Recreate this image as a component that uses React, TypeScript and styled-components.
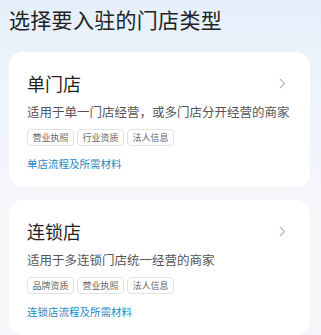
import styled, { createGlobalStyle } from "styled-components";

const GlobalStyle = createGlobalStyle`
    html, body {
        margin: 0;
        padding: 0;
    }
    body {
        font-family: "Noto Sans CJK SC", "Noto Sans", sans-serif;
        background: linear-gradient(180deg, #e5f0fb 0%, #eef4fb 30%, #f4f6fa 55%, #f5f6fa 100%);
        min-height: 335px;
    }
`

const Page = styled.div`
    padding: 4px 11px 0 9px;
    display: flex;
    flex-direction: column;
`

const Heading = styled.h1`
    margin: 0 0 18px;
    font-size: 21px;
    line-height: 30px;
    font-weight: 400;
    color: #222222;
    letter-spacing: 0.3px;
`

const CardList = styled.div`
    display: flex;
    flex-direction: column;
    gap: 13px;
`

const Card = styled.div`
    background: #ffffff;
    border-radius: 14px;
    padding: 19px 18px 15px;
    display: flex;
    flex-direction: column;
`

const CardHead = styled.div`
    display: flex;
    justify-content: space-between;
    align-items: center;
    height: 24px;
`

const CardTitle = styled.div`
    font-size: 18px;
    line-height: 24px;
    color: #1f1f1f;
`

const Chevron = styled.svg`
    width: 7px;
    height: 11px;
    margin-right: 6px;
`

const Desc = styled.div`
    margin-top: 8px;
    font-size: 12.5px;
    line-height: 18px;
    color: #555555;
`

const Tags = styled.div`
    margin-top: 8px;
    display: flex;
    gap: 3px;
`

const Tag = styled.span`
    height: 17px;
    box-sizing: border-box;
    padding: 0 4.5px;
    border: 1px solid #e2e2e2;
    border-radius: 4px;
    font-size: 9px;
    line-height: 15px;
    color: #666666;
`

const Link = styled.a`
    margin-top: 10px;
    font-size: 10.5px;
    line-height: 16px;
    color: #2a86c4;
    text-decoration: none;
`

const stores = [
    {
        title: "单门店",
        desc: "适用于单一门店经营，或多门店分开经营的商家",
        tags: ["营业执照", "行业资质", "法人信息"],
        link: "单店流程及所需材料",
    },
    {
        title: "连锁店",
        desc: "适用于多连锁门店统一经营的商家",
        tags: ["品牌资质", "营业执照", "法人信息"],
        link: "连锁店流程及所需材料",
    },
];

const App = () => {
    return (
        <>
            <GlobalStyle/>
            <Page>
                <Heading>选择要入驻的门店类型</Heading>
                <CardList>
                    {stores.map((s) => (
                        <Card key={s.title}>
                            <CardHead>
                                <CardTitle>{s.title}</CardTitle>
                                <Chevron viewBox="0 0 7 11" fill="none">
                                    <path d="M1 1 L5.5 5.5 L1 10" stroke="#b5b5b5" strokeWidth="1.1"/>
                                </Chevron>
                            </CardHead>
                            <Desc>{s.desc}</Desc>
                            <Tags>
                                {s.tags.map((t) => <Tag key={t}>{t}</Tag>)}
                            </Tags>
                            <Link>{s.link}</Link>
                        </Card>
                    ))}
                </CardList>
            </Page>
        </>
    );
}

export default App;
